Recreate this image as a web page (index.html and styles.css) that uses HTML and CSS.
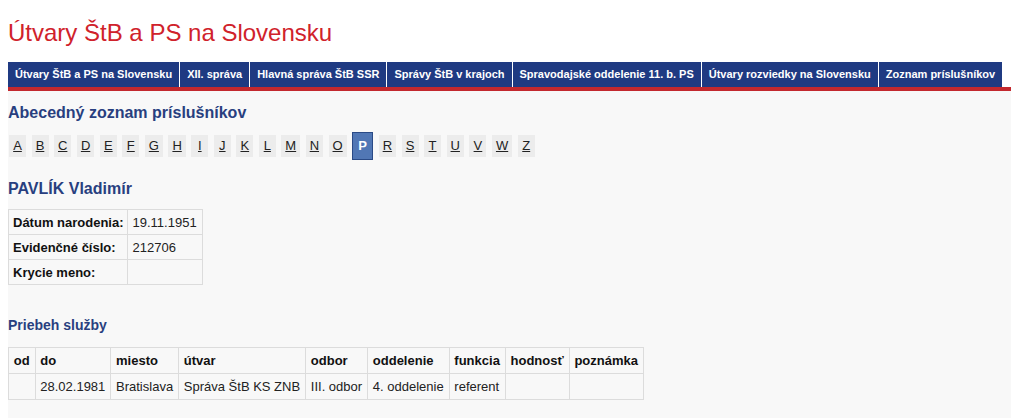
FILE: index.html
```html
<!DOCTYPE html>
<html>
<head>
<meta charset="utf-8">
<link rel="stylesheet" href="styles.css">
</head>
<body>
<h1 class="title">Útvary ŠtB a PS na Slovensku</h1>
<div class="topnav">
  <a href="#">Útvary ŠtB a PS na Slovensku</a>
  <a href="#">XII. správa</a>
  <a href="#">Hlavná správa ŠtB SSR</a>
  <a href="#">Správy ŠtB v krajoch</a>
  <a href="#">Spravodajské oddelenie 11. b. PS</a>
  <a href="#">Útvary rozviedky na Slovensku</a>
  <a class="last" href="#">Zoznam príslušníkov</a>
</div>
<div class="content">
  <h2>Abecedný zoznam príslušníkov</h2>
  <div class="letters">
    <a href="#">A</a>
    <a href="#">B</a>
    <a href="#">C</a>
    <a href="#">D</a>
    <a href="#">E</a>
    <a href="#">F</a>
    <a href="#">G</a>
    <a href="#">H</a>
    <a href="#">I</a>
    <a href="#">J</a>
    <a href="#">K</a>
    <a href="#">L</a>
    <a href="#">M</a>
    <a href="#">N</a>
    <a href="#">O</a>
    <a class="active" href="#">P</a>
    <a href="#">R</a>
    <a href="#">S</a>
    <a href="#">T</a>
    <a href="#">U</a>
    <a href="#">V</a>
    <a href="#">W</a>
    <a href="#">Z</a>
  </div>

  <h2 class="name">PAVLÍK Vladimír</h2>
  <table class="info">
    <tr><th>Dátum narodenia:</th><td>19.11.1951</td></tr>
    <tr><th>Evidenčné číslo:</th><td>212706</td></tr>
    <tr><th>Krycie meno:</th><td></td></tr>
  </table>

  <h3>Priebeh služby</h3>
  <table class="service">
    <tr>
      <th>od</th><th>do</th><th>miesto</th><th>útvar</th><th>odbor</th>
      <th>oddelenie</th><th>funkcia</th><th>hodnosť</th><th>poznámka</th>
    </tr>
    <tr>
      <td></td><td>28.02.1981</td><td>Bratislava</td><td>Správa ŠtB KS ZNB</td><td>III. odbor</td>
      <td>4. oddelenie</td><td>referent</td><td></td><td></td>
    </tr>
  </table>
</div>
</body>
</html>
```

FILE: styles.css
```css
* {box-sizing: border-box;}

body {
  margin: 0;
  font-family: "Liberation Sans", Arial, Helvetica, sans-serif;
  background-color: #fff;
  color: #222;
}

.title {
  margin: 0 0 15px 8px;
  padding-top: 19px;
  font-size: 24px;
  line-height: 28px;
  font-weight: normal;
  color: #d0222b;
}

.topnav {
  display: flex;
  margin-left: 8px;
  border-bottom: 4px solid #c3282e;
}

.topnav a {
  display: block;
  background-color: #1f3a82;
  color: white;
  font-size: 11px;
  font-weight: bold;
  line-height: 25px;
  padding: 0 7px;
  text-decoration: none;
  border-right: 1px solid #fff;
}

.topnav a.last {
  border-right: none;
}

.content {
  margin-left: 8px;
  background-color: #f8f8f8;
  padding: 12px 0 20px 0;
}

h2 {
  margin: 0;
  font-size: 16px;
  line-height: 20px;
  color: #283f7f;
}

h3 {
  margin: 0 0 13px 0;
  font-size: 14px;
  line-height: 18px;
  color: #283f7f;
}

.letters {
  display: flex;
  align-items: center;
  gap: 5.5px;
  margin: 8px 0 18px 1px;
  height: 30px;
}

.letters a {
  display: block;
  background-color: #ececec;
  color: #222;
  font-size: 13px;
  line-height: 22px;
  padding: 0 4px;
  min-width: 17px;
  text-align: center;
}

.letters a.active {
  background-color: #5177b5;
  border: 1px solid #2a4a86;
  color: #fff;
  font-weight: bold;
  text-decoration: none;
  line-height: 26px;
  min-width: 21px;
}

.name {
  margin-bottom: 10px;
}

table {
  border-collapse: collapse;
  font-size: 13px;
}

th, td {
  border: 1px solid #dcdcdc;
  text-align: left;
  padding: 0 5px;
  height: 25px;
}

th {
  font-weight: bold;
  color: #111;
}

.info {
  margin-bottom: 31px;
}

.info th {
  padding: 0 3px 0 4px;
  height: 24.5px;
}

.info td {
  min-width: 73px;
}

.service th, .service td {
  padding: 0 5px 0 4.7px;
  height: 26px;
}
```
